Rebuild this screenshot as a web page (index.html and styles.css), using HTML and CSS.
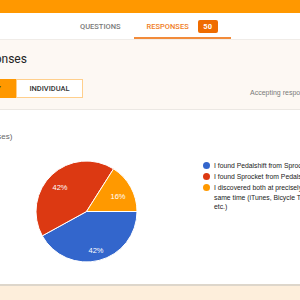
FILE: index.html
```html
<!DOCTYPE html>
<html lang="en">
<head>
    <meta charset="UTF-8">
    <title>Responses</title>
    <link rel="stylesheet" href="styles.css">
</head>
<body>
    <div class="topbar"></div>

    <nav class="tabs">
        <div class="tab">QUESTIONS</div>
        <div class="tab active">RESPONSES <span class="badge">50</span></div>
    </nav>

    <section class="summary">
        <h1 class="title">Responses</h1>
        <div class="summary-row">
            <div class="toggle">
                <button class="toggle-btn selected">SUMMARY</button>
                <button class="toggle-btn">INDIVIDUAL</button>
            </div>
            <div class="accepting">Accepting responses</div>
        </div>
    </section>

    <section class="chart-card">
        <div class="count">(50 responses)</div>
        <div class="chart">
            <svg class="pie" width="101" height="101" viewBox="0 0 101 101">
                <path d="M50.5 50.5 L101 50.5 A50.5 50.5 0 0 1 6.25 74.83 Z" fill="#3366cc" stroke="#fff" stroke-width="1"/>
                <path d="M50.5 50.5 L6.25 74.83 A50.5 50.5 0 0 1 77.56 7.86 Z" fill="#dc3912" stroke="#fff" stroke-width="1"/>
                <path d="M50.5 50.5 L77.56 7.86 A50.5 50.5 0 0 1 101 50.5 Z" fill="#ff9900" stroke="#fff" stroke-width="1"/>
                <text x="24" y="29" class="pie-label">42%</text>
                <text x="82" y="38" class="pie-label">16%</text>
                <text x="60" y="92" class="pie-label">42%</text>
            </svg>
            <ul class="legend">
                <li><span class="dot blue"></span>I found Pedalshift from Sprocket Podcast</li>
                <li><span class="dot red"></span>I found Sprocket from Pedalshift</li>
                <li><span class="dot orange"></span>I discovered both at precisely the same time (iTunes, Bicycle Times, etc.)</li>
            </ul>
        </div>
    </section>

    <div class="footer"></div>
</body>
</html>
```

FILE: styles.css
```css
/* General */
body {
    margin: 0;
    width: 300px;
    height: 300px;
    overflow: hidden;
    background-color: #fdeedb;
    font-family: Roboto, 'Liberation Sans', sans-serif;
}

.topbar {
    height: 13px;
    background-color: #ff9800;
}

/* Tabs */
.tabs {
    display: flex;
    height: 27px;
    padding-left: 67px;
    background-color: #ffffff;
    border-bottom: 1px solid #f0ece8;
    box-sizing: border-box;
}

.tab {
    display: flex;
    align-items: center;
    gap: 9px;
    padding: 0 13px;
    font-size: 7.5px;
    font-weight: 500;
    color: #7a7a7a;
    white-space: nowrap;
}

.tab.active {
    color: #f07c1e;
    border-bottom: 2px solid #f28b3a;
    padding-top: 2px;
}

.badge {
    display: inline-block;
    width: 20px;
    height: 13px;
    line-height: 13px;
    border-radius: 2px;
    background-color: #ef6c00;
    color: #ffffff;
    text-align: center;
    font-weight: 700;
    font-size: 7.5px;
}

/* Summary panel */
.summary {
    height: 70px;
    padding-top: 1px;
    background-color: #fdf8f3;
    border-bottom: 1px solid #ece8e3;
    box-sizing: border-box;
}

.title {
    margin: 9px 0 0 -32px;
    font-size: 12px;
    font-weight: 400;
    color: #222;
    line-height: 18px;
}

.summary-row {
    display: flex;
    justify-content: space-between;
    align-items: flex-end;
    margin-top: 11px;
}

.toggle {
    display: flex;
    margin-left: -51px;
}

.toggle-btn {
    width: 67px;
    height: 19px;
    padding: 0;
    border: 1px solid #ffcf8c;
    background-color: #ffffff;
    font-family: Roboto, 'Liberation Sans', sans-serif;
    font-size: 7.5px;
    font-weight: 500;
    color: #333;
}

.toggle-btn.selected {
    background-color: #ff9800;
    border-color: #ff9800;
    color: #333;
}

.accepting {
    margin-right: -15px;
    margin-bottom: 2px;
    font-family: 'Liberation Sans', sans-serif;
    font-size: 7px;
    color: #7a7a7a;
    white-space: nowrap;
}

/* Chart card */
.chart-card {
    height: 176px;
    background-color: #ffffff;
    border-bottom: 2px solid #ddd6cb;
    box-sizing: border-box;
    overflow: hidden;
}

.count {
    margin: 22px 0 0 -41px;
    font-family: 'Liberation Sans', sans-serif;
    font-size: 8px;
    color: #666;
}

.chart {
    display: flex;
    align-items: flex-start;
    margin-top: 15px;
    padding-left: 36px;
}

.pie {
    display: block;
    flex-shrink: 0;
    margin-top: 5px;
}

.pie-label {
    fill: #ffffff;
    font-family: 'Liberation Sans', sans-serif;
    font-size: 7.5px;
    text-anchor: middle;
}

.legend {
    list-style: none;
    flex-shrink: 0;
    margin: 5px 0 0 67px;
    padding: 0;
    width: 140px;
    font-family: 'Liberation Sans', sans-serif;
    font-size: 6.8px;
    color: #222;
    line-height: 9.5px;
}

.legend li {
    position: relative;
    padding-left: 10px;
    margin-bottom: 1.5px;
    white-space: nowrap;
}

.legend li:last-child {
    white-space: normal;
    width: 115px;
}

.dot {
    position: absolute;
    left: -1px;
    top: 1px;
    width: 7px;
    height: 7px;
    border-radius: 50%;
}

.dot.blue { background-color: #3366cc; }
.dot.red { background-color: #dc3912; }
.dot.orange { background-color: #ff9900; }

.footer {
    height: 20px;
}
```
